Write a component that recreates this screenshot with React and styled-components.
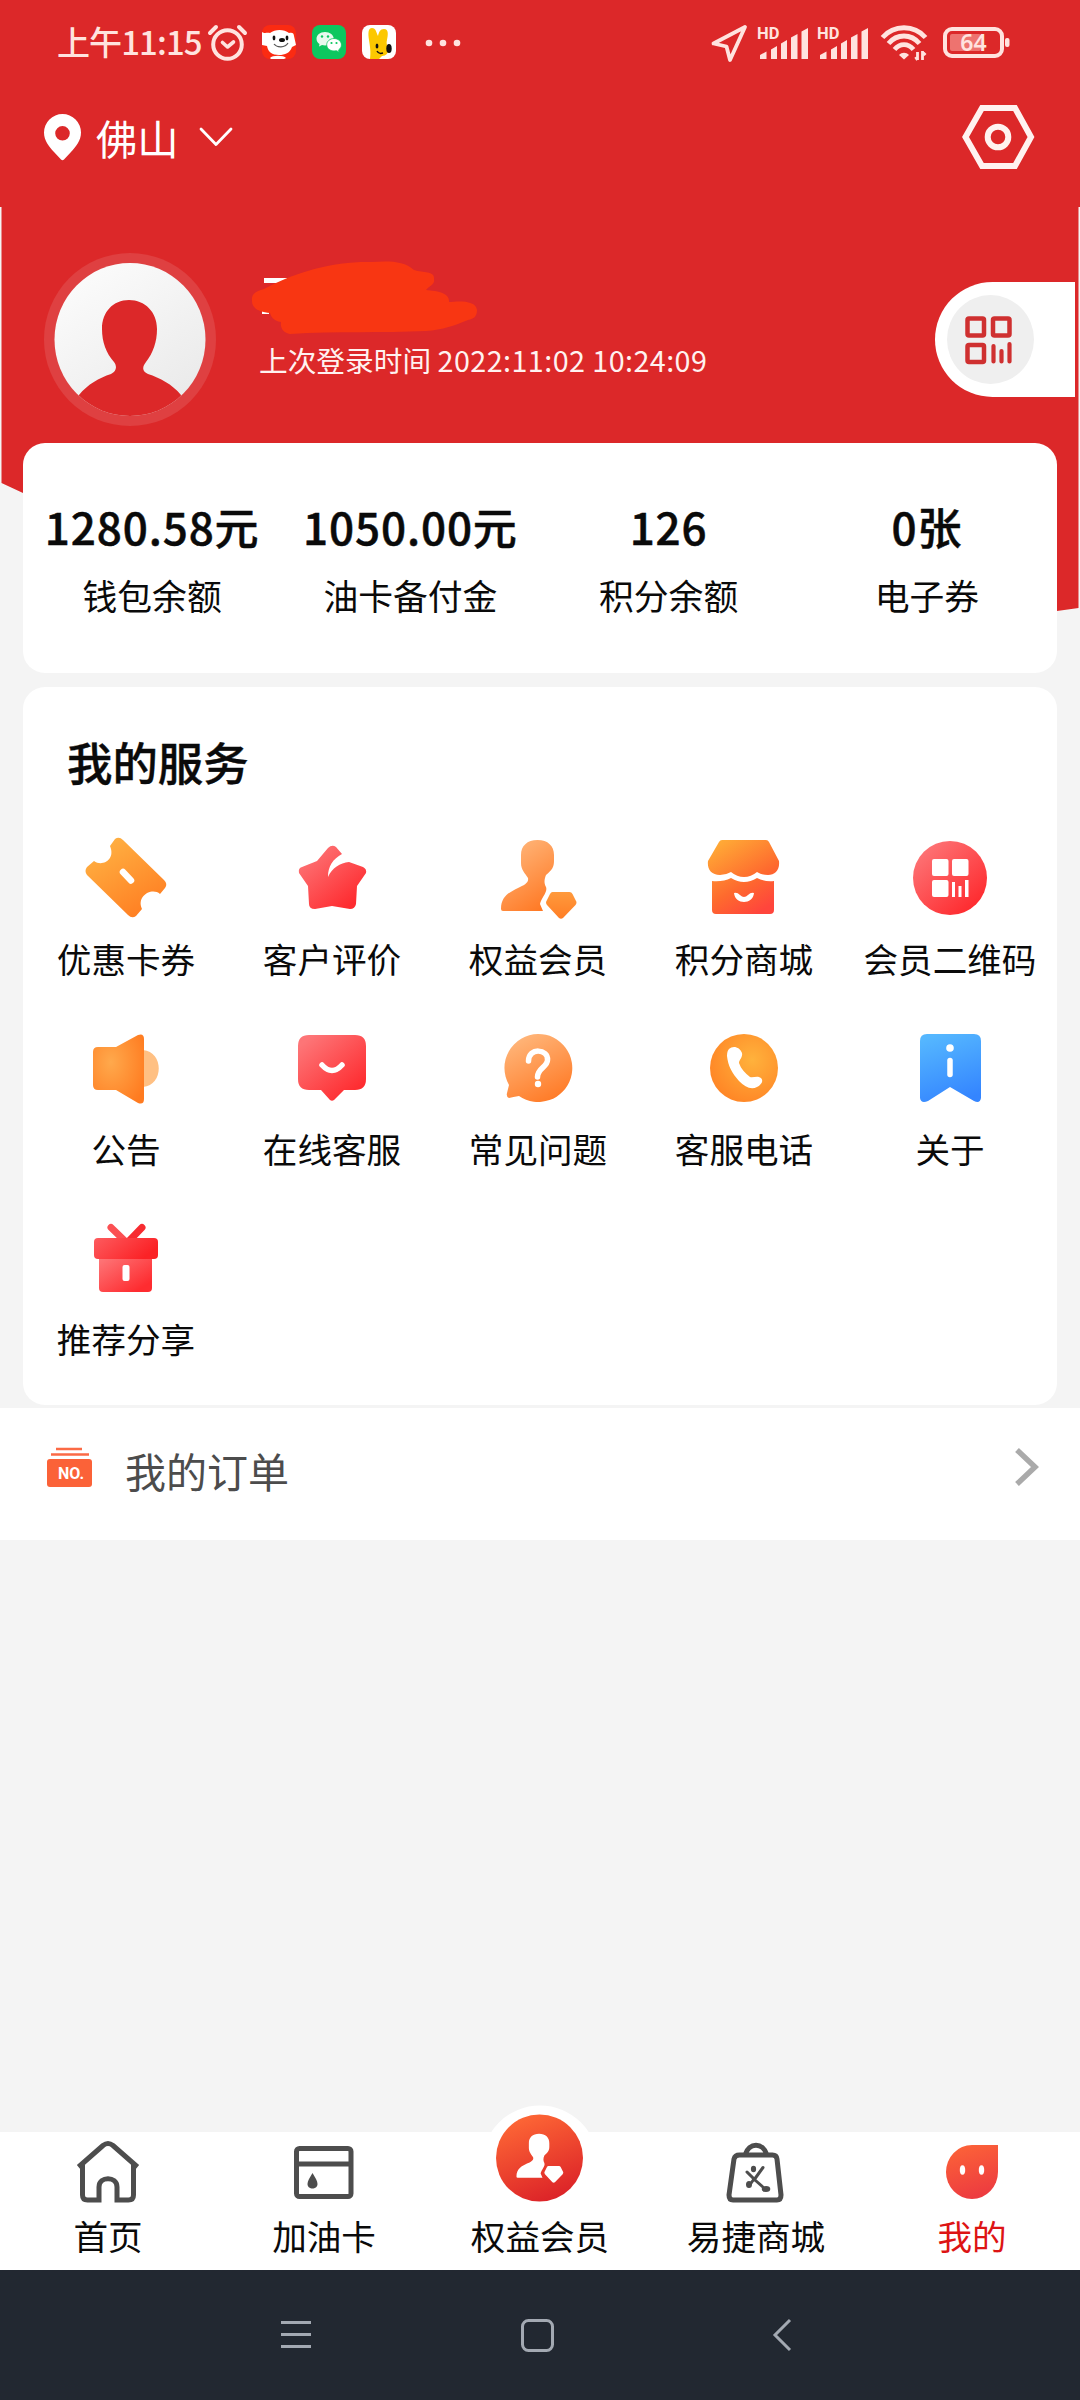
import React, { useState } from 'react';
import styled, { createGlobalStyle } from 'styled-components';

const GlobalStyle = createGlobalStyle`
  * {
    box-sizing: border-box;
  }

  body {
    margin: 0;
    background: #f4f4f4;
    font-family: "Noto Sans CJK SC", "Noto Sans", sans-serif;
    color: #0a0a0a;
  }

  svg {
    display: block;
    overflow: visible;
    flex-shrink: 0;
  }
`;

const Page = styled.div`
  position: relative;
  display: flex;
  flex-direction: column;
  width: 1080px;
  height: 2400px;
  overflow: hidden;

  /* slanted red backdrop, continues behind the balance card */
  &::before {
    content: "";
    position: absolute;
    z-index: -1;
    inset: 0 0 auto 0;
    height: 620px;
    background: #dc2829;
    clip-path: polygon(0 0, 1080px 0, 1080px 207px, 1078.5px 207px, 1078.5px 608px, 1057px 611px, 23px 493px, 1.5px 483px, 1.5px 207px, 0 207px);
  }
`;

const StatusBar = styled.header`
  display: flex;
  align-items: center;
  justify-content: space-between;
  height: 85px;
  padding: 0 70px 0 57px;
`;

const StatusGroup = styled.div`
  display: flex;
  align-items: center;
`;

const Clock = styled.span`
  width: 150px;
  margin-top: -4px;
  color: #ffe3df;
  font-size: 33px;
  font-weight: 500;
  line-height: 40px;
  letter-spacing: -0.9px;
  white-space: nowrap;
`;

const LocationBar = styled.div`
  display: flex;
  align-items: center;
  height: 105px;
  padding: 0 46px 2px 44px;
`;

const City = styled.span`
  margin-left: 14px;
  color: #fff;
  font-size: 41.3px;
  line-height: 50px;
`;

const Spacer = styled.div`
  flex: 1;
`;

const Profile = styled.section`
  display: flex;
  align-items: center;
  height: 173px;
  margin-top: 63px;
  padding: 0 5px 0 44px;
`;

const Avatar = styled.div`
  width: 172px;
  height: 173px;
`;

const UserInfo = styled.div`
  flex: 1;
  align-self: flex-start;
  display: flex;
  flex-direction: column;
  margin: 8px 0 0 36px;
`;

const LastLogin = styled.div`
  margin: 7px 0 0 7px;
  color: #fff2f0;
  font-size: 28.7px;
  line-height: 40px;
  white-space: nowrap;
`;

const LoginTime = styled.span`
  letter-spacing: 0.45px;
`;

const CodeTab = styled.div`
  display: flex;
  align-items: center;
  width: 140px;
  height: 115px;
  padding-left: 12px;
  border-radius: 58px 0 0 58px;
  background: #fff;
`;

const CodeDisc = styled.div`
  display: flex;
  align-items: center;
  justify-content: center;
  width: 87px;
  height: 89px;
  padding-right: 3px;
  border-radius: 50%;
  background: #efefef;
`;

const Card = styled.section`
  width: 1034px;
  margin: 0 auto;
  border-radius: 22px;
  background: #fff;
`;

const BalanceCard = styled(Card)`
  display: grid;
  grid-template-columns: repeat(4, 1fr);
  height: 230px;
  margin-top: 17px;
  padding: 57px 1px 0 0;
`;

const Balance = styled.div`
  display: flex;
  flex-direction: column;
  align-items: center;
  white-space: nowrap;
`;

const Amount = styled.div`
  font-size: 44px;
  font-weight: 500;
  line-height: 52px;
  letter-spacing: 0.9px;
  -webkit-text-stroke: 0.5px currentColor;
`;

const BalanceLabel = styled.div`
  margin-top: 21px;
  font-size: 34.8px;
  line-height: 44px;
`;

const ServiceCard = styled(Card)`
  height: 718px;
  margin-top: 14px;
  padding: 46px 4px 0 0;
`;

const CardTitle = styled.h2`
  margin: 0 0 0 44px;
  font-size: 45.4px;
  font-weight: 500;
  line-height: 56px;
  -webkit-text-stroke: 0.4px currentColor;
`;

const ServiceGrid = styled.div`
  display: grid;
  grid-template-columns: repeat(5, 1fr);
  grid-auto-rows: 190px;
  margin-top: 44px;
`;

const Service = styled.div`
  display: flex;
  flex-direction: column;
  align-items: center;
  white-space: nowrap;
`;

const ServiceName = styled.span`
  margin-top: 13px;
  font-size: 34.6px;
  line-height: 44px;
`;

const OrderRow = styled.div`
  display: flex;
  align-items: center;
  height: 132px;
  margin-top: 3px;
  padding: 0 40px 15px 47px;
  background: #fff;
`;

const OrderLabel = styled.span`
  flex: 1;
  margin: 7px 0 0 32px;
  color: #4c4c4c;
  font-size: 41px;
  line-height: 50px;
`;

const TabBar = styled.nav`
  display: grid;
  grid-template-columns: repeat(5, 1fr);
  height: 138px;
  margin-top: auto;
  padding-top: 4px;
  background: #fff;
`;

const Tab = styled.a`
  display: flex;
  flex-direction: column;
  align-items: center;
  color: ${(props) => (props.$active ? '#dd1414' : '#0a0a0a')};
  font-size: 34.6px;
  line-height: 44px;
  cursor: pointer;
`;

const TabLabel = styled.span`
  margin-top: 5px;
`;

const SystemNav = styled.footer`
  display: flex;
  align-items: center;
  height: 130px;
  padding: 0 289px 0 281px;
  justify-content: space-between;
  background: #222831;
`;

const PALE = '#ffe3df';

const AlarmIcon = () => (
  <svg width="40" height="38" viewBox="0 0 40 38" fill="none" stroke={PALE} strokeLinecap="round">
    <circle cx="20.500" cy="20.500" r="14.300" strokeWidth="4" />
    <path d="M3 9 9 3M38 9 32 3" strokeWidth="4" />
    <path d="M15.500 18.500 20.500 23l6-5" strokeWidth="3.600" strokeLinejoin="round" />
  </svg>
);

const AppIcon = styled.svg`
  width: 34px;
  height: 34px;
  margin: -1px 0 0 ${(props) => props.$gap || 16}px;
`;

const DogApp = () => (
  <AppIcon viewBox="0 0 34 34" $gap={15}>
    <rect width="34" height="34" rx="8" fill="#fb2b12" />
    <path d="M0 7c3 2 5 0 8 1C13 4 22 4 27 8c3-1 5 0 5 3l2 9-4 2c-2 6-7 8-13 8-7 0-11-3-12-9l-5-1z" fill="#fff" />
    <path d="M8 33c2-3 14-3 16 0l-2 1H9z" fill="#fff" />
    <ellipse cx="12" cy="13" rx="1.400" ry="2.400" fill="#111" />
    <ellipse cx="25" cy="13" rx="1.400" ry="2.400" fill="#111" />
    <ellipse cx="20" cy="15" rx="3" ry="2" fill="#111" />
    <path d="M12 19c3 4 11 4 14-1" stroke="#555" strokeWidth="1.200" fill="none" />
  </AppIcon>
);

const ChatApp = () => (
  <AppIcon viewBox="0 0 34 34">
    <rect width="34" height="34" rx="8" fill="#0cc75f" />
    <path d="M13 7c-5 0-8.500 3-8.500 6.800 0 2.200 1 4 3 5.200L7 21.500l3-1.500c1 .3 2 .4 3 .4 5 0 8.800-3 8.800-6.600S18 7 13 7z" fill="#e8f9ee" />
    <path d="M22 13.500c-4 0-7.300 2.800-7.300 6.300s3.300 6.200 7.300 6.200l2.500-.3 2.700 1.500-.6-2.300c1.700-1.200 2.800-3 2.800-5 0-3.600-3.300-6.400-7.400-6.400z" fill="#fff" stroke="#0cc75f" strokeWidth=".8" />
    <g fill="#0cc75f"><circle cx="10" cy="11.500" r="1.200" /><circle cx="16" cy="11.500" r="1.200" /><circle cx="19.500" cy="18" r="1.100" /><circle cx="24.500" cy="18" r="1.100" /></g>
  </AppIcon>
);

const RabbitApp = () => (
  <AppIcon viewBox="0 0 34 34">
    <rect width="34" height="34" rx="8" fill="#fff" />
    <path d="M8 34C9 26 8 22 7 15 6 8 6 3 10 3c4 0 4 4 6 8 1-4 2-7 6-7 5 0 4 6 3 11-1 3 0 5 1 8 1 5-2 8-6 8l-3 3z" fill="#fcc800" />
    <ellipse cx="15" cy="21" rx="1.400" ry="2.500" fill="#111" />
    <ellipse cx="27" cy="23.500" rx="2.700" ry="4.500" fill="#111" />
    <path d="M15 26c1 2 3 3 6 2" stroke="#111" strokeWidth="1.500" fill="none" />
  </AppIcon>
);

const MoreDots = () => (
  <svg width="36" height="8" viewBox="0 0 36 8" fill={PALE} style={{ marginLeft: 29 }}>
    <circle cx="4" cy="4" r="3.300" /><circle cx="18" cy="4" r="3.300" /><circle cx="32" cy="4" r="3.300" />
  </svg>
);

const LocateIcon = () => (
  <svg width="36" height="38" viewBox="0 0 36 38" fill="none" stroke={PALE} strokeWidth="3.800" strokeLinejoin="round">
    <path d="M34 3 2.500 19.500 15.500 22.500 19 36z" />
  </svg>
);

const SignalIcon = ({ gap }) => (
  <svg width="50" height="34" viewBox="0 0 50 34" fill={PALE} style={{ marginLeft: gap }}>
    <text x="-1" y="13" fontSize="16.500" fontWeight="700" fontFamily="Roboto, sans-serif">HD</text>
    <path d="M2 33v-4l6.500-3.500V33zM13 33v-9.500l6-3.500v13zM23 33V17.500l6-3.500v19zM33 33V11.500L39.500 8v25zM43.500 33V5.500L50 2v31z" />
  </svg>
);

const WifiIcon = () => (
  <svg width="46" height="36" viewBox="0 0 46 36" fill="none" stroke={PALE} strokeWidth="4.800" style={{ marginLeft: 13 }}>
    <path d="M1.500 12.500C13-.5 33-.5 44.500 12.500" />
    <path d="M7.500 18.500C16 8.500 30 8.500 38.500 18.500" />
    <path d="M13.500 24.500C19 18 27 18 32.500 24.500" />
    <path d="M18 30l5 4.500 5-4.500c-3-3-7-3-10 0z" fill={PALE} stroke="none" />
    <path d="M36.500 35v-8m-2 5 2 3M41.500 35v-9m0 1 3 3" strokeWidth="2.800" />
  </svg>
);

const BatteryIcon = () => (
  <svg width="67" height="31" viewBox="0 0 67 31" style={{ marginLeft: 16 }}>
    <rect x="2" y="2" width="57" height="27" rx="7" fill="none" stroke={PALE} strokeWidth="4" />
    <rect x="7" y="7" width="31" height="17" rx="2" fill="#ee736f" />
    <rect x="62" y="11" width="4.500" height="9" rx="2" fill={PALE} />
    <text x="30.500" y="24" textAnchor="middle" fontSize="23" fontWeight="600" fontFamily="Noto Sans, sans-serif" fill={PALE}>64</text>
  </svg>
);

const PinIcon = () => (
  <svg width="38" height="48" viewBox="0 0 38 48">
    <path d="M18.500 1A18.500 18.500 0 0 0 0 19.500c0 8 5 14 10 19.500l7 7.500q1.500 1.300 3 0l7-7.500c5-5.500 10-11.500 10-19.500A18.500 18.500 0 0 0 18.500 1zm0 12a7.300 7.300 0 1 1 0 14.600 7.300 7.300 0 0 1 0-14.600z" fill="#fff" />
  </svg>
);

const SettingIcon = () => (
  <svg width="72" height="64" viewBox="0 0 72 64" fill="none" stroke="#fff2f0" strokeWidth="6">
    <path d="M20 3h33l16 29-16 29H20L3.500 32z" />
    <circle cx="36" cy="32" r="10.300" />
  </svg>
);

const AvatarArt = () => (
  <svg width="172" height="173" viewBox="0 0 172 173">
    <defs>
      <linearGradient id="face" x1="0" y1="0" x2=".7" y2="1">
        <stop offset="0" stopColor="#fff" /><stop offset="1" stopColor="#e9e9e9" />
      </linearGradient>
      <clipPath id="faceClip"><ellipse cx="86" cy="86.500" rx="75.500" ry="76.500" /></clipPath>
    </defs>
    <ellipse cx="86" cy="86.500" rx="86" ry="86.500" fill="#df4041" />
    <g clipPath="url(#faceClip)">
      <rect width="172" height="173" fill="url(#face)" />
      <path d="M35 142C44 131 55 125 67 121c6-3 6-8 3-12-8-9-12-20-12-33 0-17 11-29 27-29s28 12 28 29c0 13-4 24-11 33-4 5-4 9 2 12 12 4 24 10 33 21l-5 40H35z" fill="#dc2829" />
    </g>
  </svg>
);

// user name is struck out with a marker stroke
const HiddenName = () => (
  <svg width="228" height="72" viewBox="0 0 228 72">
    <path d="M12 17h28v5H12zM10 48h7v5h-7z" fill="#fff" />
    <path d="M0 40C-1 33 4 30 12 28 45 10 84 0 120 1c18-1 32-1 42 8 10 3 21 1 20 9 1 6-5 7-8 11 12 1 24 3 23 12 10-1 27-2 28 8 0 6-3 9-9 10-12 5-26 10-42 11-44 2-90 0-136 3-6-1-10-5-9-12-8-1-10-6-11-9C8 51 0 48 0 40z" fill="#f83612" />
  </svg>
);

const CodeIcon = () => (
  <svg width="48" height="48" viewBox="0 0 48 48" fill="none" stroke="#cf3030" strokeWidth="4.500">
    <rect x="2.500" y="2.500" width="16.500" height="17" rx="1.500" />
    <rect x="28" y="2.500" width="16.500" height="17" rx="1.500" />
    <rect x="2.500" y="29" width="16.500" height="17" rx="1.500" />
    <path d="M28.500 30v15.500M36.500 35v10.500M44.500 28v17.500" strokeWidth="4.200" strokeLinecap="round" />
  </svg>
);

const Gradients = () => (
  <svg width="0" height="0" style={{ position: 'absolute' }}>
    <defs>
      <linearGradient id="orange" x1=".1" y1="0" x2=".7" y2="1">
        <stop offset="0" stopColor="#ffb545" /><stop offset="1" stopColor="#ff7e22" />
      </linearGradient>
      <linearGradient id="peach" x1=".2" y1="0" x2=".7" y2="1">
        <stop offset="0" stopColor="#ffb87d" /><stop offset="1" stopColor="#ff7a26" />
      </linearGradient>
      <linearGradient id="gem" x1="0" y1="0" x2="0" y2="1">
        <stop offset="0" stopColor="#ff9a3c" /><stop offset="1" stopColor="#ff7e26" />
      </linearGradient>
      <linearGradient id="pink" x1=".1" y1=".1" x2=".8" y2=".9">
        <stop offset="0" stopColor="#fd7577" /><stop offset="1" stopColor="#fe2c30" />
      </linearGradient>
      <linearGradient id="ribbon" x1="0" y1="0" x2="1" y2=".4">
        <stop offset="0" stopColor="#fd5b5e" /><stop offset="1" stopColor="#fb2226" />
      </linearGradient>
      <linearGradient id="shop" gradientUnits="userSpaceOnUse" x1="20" y1="10" x2="62" y2="78">
        <stop offset="0" stopColor="#ffa936" /><stop offset=".6" stopColor="#fe6a2e" /><stop offset="1" stopColor="#ff453c" />
      </linearGradient>
      <linearGradient id="blue" x1=".3" y1="0" x2=".6" y2="1">
        <stop offset="0" stopColor="#55b7ff" /><stop offset="1" stopColor="#3485ff" />
      </linearGradient>
      <radialGradient id="horn" cx=".35" cy=".4" r=".75">
        <stop offset="0" stopColor="#ffa94c" /><stop offset="1" stopColor="#ff7b20" />
      </radialGradient>
      <radialGradient id="call" cx=".62" cy=".38" r=".7">
        <stop offset="0" stopColor="#ffb23c" /><stop offset="1" stopColor="#ff8425" />
      </radialGradient>
      <linearGradient id="flame" x1=".2" y1="0" x2=".6" y2="1">
        <stop offset="0" stopColor="#ff6a36" /><stop offset="1" stopColor="#dc2328" />
      </linearGradient>
      <linearGradient id="mine" x1=".3" y1="0" x2=".6" y2="1">
        <stop offset="0" stopColor="#fc6238" /><stop offset="1" stopColor="#ec3a40" />
      </linearGradient>
    </defs>
  </svg>
);

const personPath = 'M44.500 7C34 7 28 13 28 22v8c0 7 4 10 7 15 1 5-4 7-10 10-8 4-17 8-17 21q0 2 2 2h40l-3-7c1-6 8-12 6-17-2-4-2-7 0-12 6-5 8-8 8-14v-6C61 13 55 7 44.500 7z';
const gemPath = 'M59.500 59h17q2 0 3 2l4 8q0 2-1 3L70 85q-2 1.500-4 0L54 72q-1-1-1-3l4-8q1-2 2.500-2z';

const services = [
  { name: '优惠卡券', icon: (
    <>
      <path d="M34 6q4-3 8 1l41 40q4 4 1 8l-5 6c-8-7-24 2-18 15l-6 7q-4 3-8-1L6 42q-3-4 0-8l7-6c8 6 22-1 16-15z" fill="url(#orange)" />
      <path d="M42 39l8 8.500" stroke="#fff" strokeWidth="6.500" strokeLinecap="round" />
    </>
  ) },
  { name: '客户评价', icon: (
    <path d="M41 15q4-4 8-1l6 7C46 26 41 33 41 44c4-9 12-14 21-15l14 5q4 2 3 6L70 53l-1 18q-1 5-6 5L45 73l-17 3q-6 0-6-5l-1-18L12 40q-1-5 3-6l15-6z" fill="url(#pink)" />
  ) },
  { name: '权益会员', icon: (
    <g fill="url(#peach)"><path d={personPath} /><path d={gemPath} fill="url(#gem)" /></g>
  ) },
  { name: '积分商城', icon: (
    <g fill="url(#shop)">
      <path d="M23 7h44q2 0 3 2l10 19c1 9-4 14-11 14q-6 0-11-3-6 5-13 5t-13-5q-5 3-11 3C12 42 8 36 9 28L20 9q1-2 3-2z" />
      <path d="M13 48q11 1 19-3 13 8 26 0 8 4 17 3v29q0 4-4 4H17q-4 0-4-4z" />
      <path d="M35 60q3-1 6 2 4 4 8 0 3-3 6-2c-1 12-19 12-20 0z" fill="#fff" />
    </g>
  ) },
  { name: '会员二维码', icon: (
    <>
      <circle cx="45" cy="45" r="37" fill="url(#pink)" />
      <g fill="#fff">
        <rect x="27" y="26" width="16.500" height="17" rx="2" />
        <rect x="47" y="26" width="16.500" height="17" rx="2" />
        <rect x="27" y="47" width="16.500" height="17" rx="2" />
        <path d="M47 49h3v15h-3zM53.500 53h3v11h-3zM60 47h3.500v17H60z" />
      </g>
    </>
  ) },
  { name: '公告', icon: (
    <>
      <path d="M62 27c21 2 21 35 0 37z" fill="#ffc083" />
      <path d="M17 24h18L57 12q6-2 6 4v60q0 6-6 4L35 67H17q-5 0-5-5V29q0-5 5-5z" fill="url(#horn)" />
    </>
  ) },
  { name: '在线客服', icon: (
    <>
      <path d="M22 12h46q11 0 11 11v33q0 11-11 11H57l-10 10q-2 1.500-4 0L34 67H22q-11 0-11-11V23q0-11 11-11z" fill="url(#pink)" />
      <path d="M35 42q10 11 20 0" fill="none" stroke="#fff" strokeWidth="5.500" strokeLinecap="round" />
    </>
  ) },
  { name: '常见问题', icon: (
    <>
      <path d="M45 11a34 34 0 1 1-19 62q-6 1-10 2-3-1-2-5l2-8A34 34 0 0 1 45 11z" fill="url(#peach)" />
      <path d="M35.500 38c0-14 20-12 19-1 0 7-10 8-10 17" fill="none" stroke="#fff" strokeWidth="5.500" strokeLinecap="round" />
      <circle cx="45" cy="61" r="3.200" fill="#fff" />
    </>
  ) },
  { name: '客服电话', icon: (
    <>
      <circle cx="45" cy="45" r="34" fill="url(#call)" />
      <path d="M30 26c4-4 11-2 13 4 1 4-3 7-3 10 2 6 6 10 11 14 4 1 7-2 11 1 3 3 0 7-4 9-6 3-12 0-18-6C33 50 29 43 28 33q0-5 2-7z" fill="#fff" />
    </>
  ) },
  { name: '关于', icon: (
    <>
      <path d="M22 11h47q7 0 7 7v57q-1 6-7 3L45 64 23 78q-7 3-8-3V18q0-7 7-7z" fill="url(#blue)" />
      <circle cx="45" cy="25" r="3.800" fill="#fff" />
      <path d="M45 37.500v14" stroke="#fff" strokeWidth="5.500" strokeLinecap="round" />
    </>
  ) },
  { name: '推荐分享', icon: (
    <>
      <path d="M30 14.500 45 29" stroke="#fb5053" strokeWidth="7" strokeLinecap="round" />
      <path d="M61 14.500 47 29" stroke="#f72c31" strokeWidth="7" strokeLinecap="round" />
      <path d="M18 40h53v35q0 4-4 4H22q-4 0-4-4z" fill="url(#pink)" />
      <rect x="13" y="25" width="64" height="21" rx="4" fill="url(#ribbon)" />
      <rect x="41.500" y="52" width="7" height="16" rx="2" fill="#fff" />
    </>
  ) },
];

const balances = [
  ['1280.58元', '钱包余额'],
  ['1050.00元', '油卡备付金'],
  ['126', '积分余额'],
  ['0张', '电子券'],
];

const tabs = [
  { name: '首页', icon: (
    <path d="M6.500 31 31 9.500q5-4 10 0l24.500 21.500M10.500 28v31q0 5 5 5H27V51c0-11 18-11 18 0v13h11.500q5 0 5-5V28" fill="none" stroke="#4d4d4d" strokeWidth="5" />
  ) },
  { name: '加油卡', icon: (
    <>
      <rect x="8.500" y="12.500" width="54.500" height="48" rx="3" fill="none" stroke="#4d4d4d" strokeWidth="5" />
      <path d="M9 28h54" stroke="#4d4d4d" strokeWidth="5" />
      <path d="M24.500 37c3 5 5 8 5 11 0 6-10 6-10 0 0-3 2-6 5-11z" fill="#4d4d4d" />
    </>
  ) },
  { name: '权益会员', icon: (
    <>
      <circle cx="36" cy="27.500" r="58" fill="#fff" />
      <circle cx="35.500" cy="22" r="43.500" fill="url(#flame)" />
      <g transform="translate(7.500 -6.500) scale(.62)" fill="#fff"><path d={personPath} /><path d={gemPath} /></g>
    </>
  ) },
  { name: '易捷商城', icon: (
    <>
      <path d="M19.500 19h33q4 0 4.500 4l4 36q0 5-4 5H13q-4 0-4-5l5-36q1-4 5.500-4zM25 19c4-13 18-13 22 0" fill="none" stroke="#4d4d4d" strokeWidth="5" />
      <path d="M43 31.500 34 44M27 36l7 7-5 7M35 44l9 8" fill="none" stroke="#4d4d4d" strokeWidth="3" strokeLinecap="round" />
      <g fill="#4d4d4d"><ellipse cx="33.500" cy="33" rx="2.600" ry="3.200" /><ellipse cx="29" cy="48.500" rx="3" ry="3.600" /><ellipse cx="46" cy="53" rx="4.300" ry="3" /></g>
    </>
  ) },
  { name: '我的', icon: (
    <>
      <path d="M36 9h26v27a26 27 0 1 1-26-27z" fill="url(#mine)" />
      <g fill="#fff"><ellipse cx="26.500" cy="34" rx="2.700" ry="4.800" /><ellipse cx="45.500" cy="34" rx="2.700" ry="4.800" /></g>
    </>
  ) },
];

const App = () => {
  const [activeTab, setActiveTab] = useState('我的');

  return (
    <Page>
      <GlobalStyle />
      <Gradients />

      <StatusBar>
        <StatusGroup>
          <Clock>上午11:15</Clock>
          <AlarmIcon />
          <DogApp />
          <ChatApp />
          <RabbitApp />
          <MoreDots />
        </StatusGroup>
        <StatusGroup>
          <LocateIcon />
          <SignalIcon gap={11} />
          <SignalIcon gap={10} />
          <WifiIcon />
          <BatteryIcon />
        </StatusGroup>
      </StatusBar>

      <LocationBar>
        <PinIcon />
        <City>佛山</City>
        <svg width="34" height="20" viewBox="0 0 34 20" fill="none" stroke="#fff" strokeWidth="2.800" style={{ marginLeft: 20 }}>
          <path d="M2 2l15 15.500L32 2" strokeLinecap="round" strokeLinejoin="round" />
        </svg>
        <Spacer />
        <SettingIcon />
      </LocationBar>

      <Profile>
        <Avatar><AvatarArt /></Avatar>
        <UserInfo>
          <HiddenName />
          <LastLogin>上次登录时间 <LoginTime>2022:11:02 10:24:09</LoginTime></LastLogin>
        </UserInfo>
        <CodeTab>
          <CodeDisc><CodeIcon /></CodeDisc>
        </CodeTab>
      </Profile>

      <BalanceCard>
        {balances.map(([amount, label]) => (
          <Balance key={label}>
            <Amount>{amount}</Amount>
            <BalanceLabel>{label}</BalanceLabel>
          </Balance>
        ))}
      </BalanceCard>

      <ServiceCard>
        <CardTitle>我的服务</CardTitle>
        <ServiceGrid>
          {services.map((service) => (
            <Service key={service.name}>
              <svg width="90" height="90" viewBox="0 0 90 90" fill="none">{service.icon}</svg>
              <ServiceName>{service.name}</ServiceName>
            </Service>
          ))}
        </ServiceGrid>
      </ServiceCard>

      <OrderRow>
        <svg width="46" height="40" viewBox="0 0 46 40">
          <path d="M9 2h26M4 7.500h38" stroke="#fb6a45" strokeWidth="2.600" />
          <rect x="0" y="12" width="45" height="28" rx="3" fill="#fb6238" />
          <text x="24" y="32" textAnchor="middle" fontSize="16" fontWeight="700" fontFamily="Roboto, sans-serif" fill="#fff">NO.</text>
        </svg>
        <OrderLabel>我的订单</OrderLabel>
        <svg width="26" height="40" viewBox="0 0 26 40" fill="none" stroke="#aaa" strokeWidth="5.500">
          <path d="M3 3l18 17L3 37" />
        </svg>
      </OrderRow>

      <TabBar>
        {tabs.map((tab) => (
          <Tab key={tab.name} $active={tab.name === activeTab} onClick={() => setActiveTab(tab.name)}>
            <svg width="72" height="72" viewBox="0 0 72 72">{tab.icon}</svg>
            <TabLabel>{tab.name}</TabLabel>
          </Tab>
        ))}
      </TabBar>

      <SystemNav>
        <svg width="30" height="30" viewBox="0 0 30 30" stroke="#a3a9b2" strokeWidth="3.200">
          <path d="M0 2.500h30M0 14.500h30M0 26.500h30" />
        </svg>
        <svg width="33" height="33" viewBox="0 0 33 33" fill="none" stroke="#a3a9b2" strokeWidth="3" style={{ marginLeft: -9 }}>
          <rect x="1.500" y="1.500" width="30" height="30" rx="6" />
        </svg>
        <svg width="18" height="32" viewBox="0 0 18 32" fill="none" stroke="#a3a9b2" strokeWidth="3">
          <path d="M17 1 2 16l15 15" />
        </svg>
      </SystemNav>
    </Page>
  );
};

export default App;
